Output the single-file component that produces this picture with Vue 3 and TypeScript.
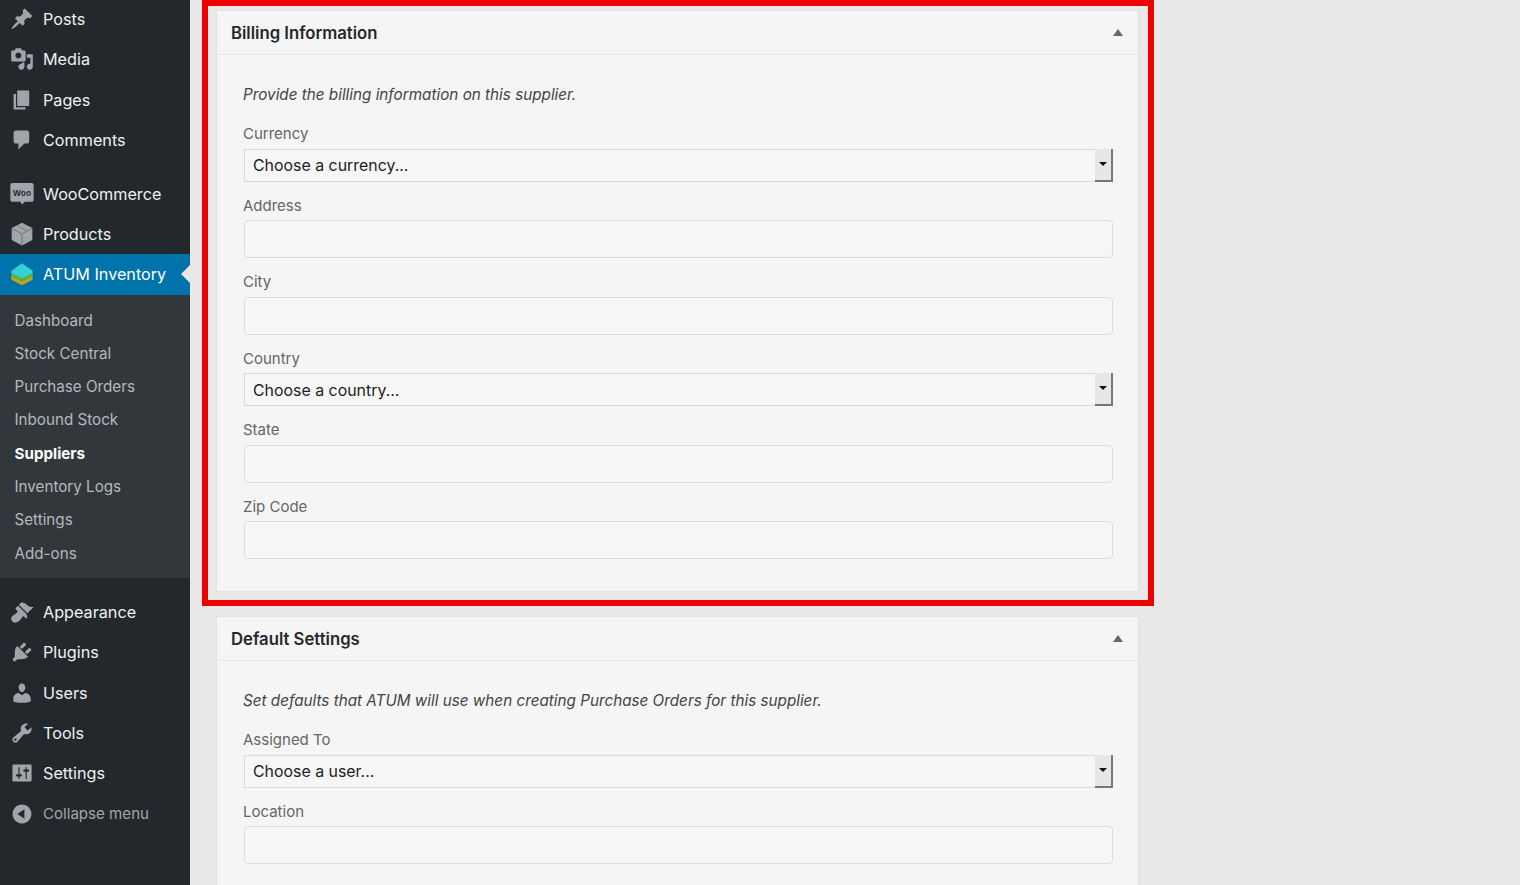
<script setup lang="ts">
interface MenuItem { label: string; path: string }
const top1: MenuItem[] = [
  { label: 'Posts', path: 'M10.44 3.02l1.82-1.82 6.36 6.35-1.83 1.82c-1.05-.68-2.48-.57-3.41.36l-.75.75c-.92.93-1.04 2.35-.35 3.41l-1.83 1.82-2.41-2.41-2.8 2.79c-.42.42-3.38 2.71-3.8 2.29s1.86-3.39 2.28-3.81l2.79-2.79L4.1 9.36l1.83-1.82c1.05.69 2.48.57 3.4-.36l.75-.75c.93-.92 1.05-2.35.36-3.41z' },
  { label: 'Media', path: 'M13 11V4c0-.55-.45-1-1-1h-1.67L9 1H5L3.67 3H2c-.55 0-1 .45-1 1v7c0 .55.45 1 1 1h10c.55 0 1-.45 1-1zM7 4.5c1.38 0 2.5 1.12 2.5 2.5S8.38 9.5 7 9.5 4.5 8.38 4.5 7 5.62 4.5 7 4.5zM14 6h5v10.5c0 1.38-1.12 2.5-2.5 2.5S14 17.88 14 16.5s1.12-2.5 2.5-2.5c.17 0 .34.02.5.05V9h-3V6zm-4 8.05V13h2v3.5c0 1.38-1.12 2.5-2.5 2.5S7 17.88 7 16.5 8.12 14 9.5 14c.17 0 .34.02.5.05z' },
  { label: 'Pages', path: 'M6 15V2h10v13H6zm-1 1h8v2H3V5h2v11z' },
  { label: 'Comments', path: 'M5 2h9c1.1 0 2 .9 2 2v7c0 1.1-.9 2-2 2h-2l-5 5v-5H5c-1.1 0-2-.9-2-2V4c0-1.1.9-2 2-2z' },
]
const top2: MenuItem[] = [
  { label: 'Appearance', path: 'M14.48 11.06L7.41 3.99l1.5-1.5c.5-.56 2.3-.47 3.51.32 1.21.8 1.43 1.28 2.91 2.1 1.18.64 2.45 1.26 4.45.85zm-.71.71L6.7 4.7 4.93 6.47c-.39.39-.39 1.02 0 1.41l1.06 1.06c.39.39.39 1.03 0 1.42-.6.6-1.43 1.11-2.21 1.69-.35.26-.7.53-1.01.84C1.43 13.23.91 14.76 1 16.03c.1 1.27 1.57 2.74 2.84 2.84 1.27.09 2.8-.43 4.14-1.77.31-.31.58-.66.84-1.01.58-.78 1.09-1.61 1.69-2.21.39-.39 1.03-.39 1.42 0l1.06 1.06c.39.39 1.02.39 1.41 0z' },
  { label: 'Plugins', path: 'M13.11 4.36L9.87 7.6 8 5.73l3.24-3.24c.35-.34 1.05-.2 1.56.32.52.51.66 1.21.31 1.55zm-8 1.77l.91-1.12 9.01 9.01-1.19.84c-.71.71-2.63 1.16-3.82 1.16H6.14L4.9 17.26c-.59.59-1.54.59-2.12 0-.59-.58-.59-1.53 0-2.12l1.24-1.24v-3.88c0-1.13.4-3.19 1.09-3.89zm7.26 3.97l3.24-3.24c.34-.35 1.04-.21 1.55.31.52.51.66 1.21.31 1.55l-3.24 3.25z' },
  { label: 'Users', path: 'M10 9.25c-2.27 0-2.73-3.44-2.73-3.44C7 4.02 7.82 2 9.97 2c2.16 0 2.98 2.02 2.71 3.81 0 0-.41 3.44-2.68 3.44zm0 2.57L12.72 10c2.39 0 4.52 2.33 4.52 4.53v2.49s-3.65 1.13-7.24 1.13c-3.65 0-7.24-1.13-7.24-1.13v-2.49c0-2.25 1.94-4.48 4.47-4.48z' },
  { label: 'Tools', path: 'M16.68 9.77c-1.34 1.34-3.3 1.67-4.95.99l-5.41 6.52c-.99.99-2.59.99-3.58 0s-.99-2.59 0-3.57l6.52-5.42c-.68-1.65-.35-3.61.99-4.95 1.28-1.28 3.12-1.62 4.72-1.06l-2.89 2.89 2.82 2.82 2.86-2.87c.53 1.58.18 3.39-1.08 4.65zM3.81 16.21c.4.39 1.04.39 1.43 0 .4-.4.4-1.04 0-1.43-.39-.4-1.03-.4-1.43 0-.39.39-.39 1.03 0 1.43z' },
  { label: 'Settings', path: 'M18 16V4c0-.55-.45-1-1-1H3c-.55 0-1 .45-1 1v12c0 .55.45 1 1 1h14c.55 0 1-.45 1-1zM8 11h1c.55 0 1 .45 1 1s-.45 1-1 1H8v1.5c0 .28-.22.5-.5.5s-.5-.22-.5-.5V13H6c-.55 0-1-.45-1-1s.45-1 1-1h1V5.5c0-.28.22-.5.5-.5s.5.22.5.5V11zm5-2h-1c-.55 0-1-.45-1-1s.45-1 1-1h1V5.5c0-.28.22-.5.5-.5s.5.22.5.5V7h1c.55 0 1 .45 1 1s-.45 1-1 1h-1v5.5c0 .28-.22.5-.5.5s-.5-.22-.5-.5V9z' },
]
const collapsePath = 'M10 2.16c4.33 0 7.84 3.51 7.84 7.84s-3.51 7.84-7.84 7.84S2.16 14.33 2.16 10 5.71 2.16 10 2.16zm2 11.72V6.12L6.18 9.97z'
const subs = ['Dashboard', 'Stock Central', 'Purchase Orders', 'Inbound Stock', 'Suppliers', 'Inventory Logs', 'Settings', 'Add-ons']
interface Field { label: string; select?: string }
const billing: Field[] = [
  { label: 'Currency', select: 'Choose a currency...' },
  { label: 'Address' },
  { label: 'City' },
  { label: 'Country', select: 'Choose a country...' },
  { label: 'State' },
  { label: 'Zip Code' },
]
const defaults: Field[] = [
  { label: 'Assigned To', select: 'Choose a user...' },
  { label: 'Location' },
]
const panels = [
  { title: 'Billing Information', desc: 'Provide the billing information on this supplier.', fields: billing, framed: true },
  { title: 'Default Settings', desc: 'Set defaults that ATUM will use when creating Purchase Orders for this supplier.', fields: defaults, framed: false },
]
</script>

<template>
  <div class="page">
    <nav class="side">
      <ul class="menu first">
        <li v-for="m in top1" :key="m.label" class="row">
          <svg class="ico" viewBox="0 0 20 20"><path :d="m.path" /></svg>
          <span>{{ m.label }}</span>
        </li>
      </ul>
      <ul class="menu second">
        <li class="row">
          <svg class="ico" viewBox="0 0 20 20">
            <path d="M2 .8h16c1 0 1.7.7 1.7 1.7v12.300c0 1-.7 1.700-1.700 1.700h-5.500l-2.500 2.300-1.300-2.300H2c-1 0-1.700-.7-1.700-1.700V2.500C.3 1.500 1 .8 2 .8z" />
            <text x="10" y="11.400" text-anchor="middle" class="woo">Woo</text>
          </svg>
          <span>WooCommerce</span>
        </li>
        <li class="row">
          <svg class="ico" viewBox="0 0 20 20">
            <path d="M10 .6l8.600 4.500v9.800L10 19.600l-8.600-4.700V5.100z" />
            <path class="cut" d="M1.400 5.300l8.600 4.600 8.600-4.600M10 9.900v9.700M5.800 2.900l8.400 4.600" />
          </svg>
          <span>Products</span>
        </li>
        <li class="row active">
          <svg class="ico" viewBox="0 0 20 20">
            <path fill="#c9a016" d="M1.200 11.500l8.800 4.400 8.800-4.400v3.200L10 19.400l-8.800-4.700z" />
            <path fill="#5fb043" d="M1.200 8.300l8.800 4.500 8.800-4.500v3.700L10 16.500 1.200 12z" />
            <path fill="#35d0d8" d="M10 1l8.800 6.200v2L10 13.600 1.200 9.200v-2z" />
          </svg>
          <span>ATUM Inventory</span>
          <i class="pointer"></i>
        </li>
      </ul>
      <ul class="sub">
        <li v-for="s in subs" :key="s" :class="{ current: s === 'Suppliers' }">{{ s }}</li>
      </ul>
      <ul class="menu third">
        <li v-for="m in top2" :key="m.label" class="row">
          <svg class="ico" viewBox="0 0 20 20"><path :d="m.path" /></svg>
          <span>{{ m.label }}</span>
        </li>
        <li class="row collapse">
          <svg class="ico" viewBox="0 0 20 20"><path :d="collapsePath" /></svg>
          <span>Collapse menu</span>
        </li>
      </ul>
    </nav>

    <main class="main">
      <div v-for="p in panels" :key="p.title" :class="p.framed ? 'frame' : 'plain'">
        <section class="panel">
          <header class="head">
            <h2>{{ p.title }}</h2>
            <i class="toggle"></i>
          </header>
          <div class="body">
            <p class="desc">{{ p.desc }}</p>
            <div v-for="f in p.fields" :key="f.label" class="field">
              <label>{{ f.label }}</label>
              <div v-if="f.select" class="select">
                <span>{{ f.select }}</span>
                <b class="arrow"></b>
              </div>
              <input v-else class="input" type="text" />
            </div>
          </div>
        </section>
      </div>
    </main>
  </div>
</template>

<style>
html, body { margin: 0; height: 100%; overflow: hidden; background: #e8e8e8; }
</style>

<style scoped>
.page { display: flex; height: 885px; overflow: hidden; font-family: Inter, "Noto Sans", sans-serif; }
ul { list-style: none; margin: 0; padding: 0; }
.side { width: 190px; flex: none; background: #23282d; color: #eee; }
.first { margin-top: -1px; }
.second { margin-top: 13.5px; }
.third { margin-top: 14px; }
.row { position: relative; height: 40.3px; display: flex; align-items: center; gap: 9.5px; padding-left: 9.5px; font-size: 16.2px; color: #eef0f1; }
.ico { width: 24px; height: 24px; flex: none; fill: #a0a5aa; }
.woo { font-size: 7px; font-weight: 700; fill: #23282d; font-family: "Liberation Sans", sans-serif; }
.cut { fill: none; stroke: #6a6f73; stroke-width: .7; }
.active { background: #0073aa; color: #fff; }
.pointer { position: absolute; right: 0; top: 11px; border: 9px solid transparent; border-right-color: #e8e8e8; border-left-width: 0; }
.sub { background: #32373c; padding: 9px 0 8px; }
.sub li { height: 33.3px; line-height: 33.3px; padding-left: 14.5px; font-size: 15.2px; color: #b4b9be; }
.sub .current { color: #fff; font-weight: 700; }
.collapse { color: #a0a5aa; font-size: 15.1px; }

.main { flex: 1; min-width: 0; padding-left: 12px; }
.frame { width: 952px; box-sizing: border-box; border: 6px solid #ee0000; padding: 4px 9px 8px 8px; margin-bottom: 10px; }
.plain { width: 952px; box-sizing: border-box; padding: 0 9px 0 14px; }
.panel { width: 923px; box-sizing: border-box; background: #f5f5f5; border: 1px solid #e0e3e3; border-top-color: #dfe3e8; }
.head { height: 43px; display: flex; align-items: center; justify-content: space-between; padding: 0 15px 0 14px; border-bottom: 1px solid #e8e8e8; }
.head h2 { margin: 0; font-size: 16.7px; font-weight: 600; color: #23282d; }
.toggle { width: 0; height: 0; border: 5px solid transparent; border-top-width: 0; border-bottom: 7px solid #666; }
.body { padding: 28px 25px 32px 26px; }
.desc { margin: 0 0 16px; height: 24px; line-height: 24px; font-size: 15.25px; font-style: italic; color: #444; }
.field { margin-bottom: 13px; }
.field:last-child { margin-bottom: 0; }
.field label { display: block; height: 20.5px; line-height: 22px; margin-bottom: 5px; font-size: 15px; color: #666; }
.select { position: relative; height: 33px; box-sizing: border-box; margin-left: 1px; border: 1px solid #d9d9d9; background: #f6f6f6; display: flex; align-items: center; padding: 1px 0 0 8px; font-size: 15.9px; color: #222; }
.arrow { position: absolute; right: -1px; top: -1px; width: 18px; height: 33px; box-sizing: border-box; background: #e6e6e6; border-right: 2px solid #777; border-bottom: 2px solid #777; }
.arrow::after { content: ""; position: absolute; left: 4px; top: 13px; border: 4px solid transparent; border-bottom-width: 0; border-top: 4px solid #111; }
.input { display: block; width: calc(100% - 1px); height: 38px; box-sizing: border-box; margin: 0 0 0 1px; border: 1px solid #dcdcdc; border-radius: 4px; background: #f6f6f6; }
</style>
